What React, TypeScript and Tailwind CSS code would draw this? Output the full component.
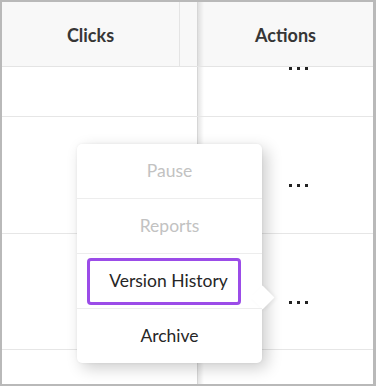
const font = { fontFamily: 'Lato, "Open Sans", sans-serif' };

function Dots() {
  return (
    <div className="flex gap-[5px] pl-[91px]">
      <span className="h-[3px] w-[3px] bg-[#222]" />
      <span className="h-[3px] w-[3px] bg-[#222]" />
      <span className="h-[3px] w-[3px] bg-[#222]" />
    </div>
  );
}

const rows = [
  { h: 'h-[117px]' },
  { h: 'h-[117px]' },
  { h: 'h-[116px]' },
  { h: 'h-[116px]' },
];

export default function App() {
  return (
    <div
      style={font}
      className="relative h-[386px] w-[376px] overflow-hidden border-2 border-r-[3px] border-[#b9b9b9] bg-white"
    >
      <div className="flex h-full flex-col">
        {/* header */}
        <div className="relative z-10 flex h-[65px] shrink-0 border-b border-[#e4e4e4] bg-[#f8f8f8] text-[18px] font-bold text-[#363636]">
          <div className="flex w-[195px] items-center">
            <div className="flex h-full w-[178px] items-center justify-center border-r border-[#e4e4e4] pt-[2px]">
              Clicks
            </div>
          </div>
          <div className="relative flex flex-1 items-center justify-center border-l border-[#d6d6d6] pt-[2px]">
            <div className="absolute inset-y-0 left-0 w-[6px] bg-gradient-to-r from-black/10 to-transparent" />
            Actions
          </div>
        </div>

        {/* body */}
        <div className="flex-1 overflow-hidden">
          <div className="-mt-[67px]">
            {rows.map((r, i) => (
              <div key={i} className={`flex ${r.h} border-b border-[#e6e6e6]`}>
                <div className="w-[195px]" />
                <div className="relative flex-1 border-l border-[#d6d6d6] pt-[67px]">
                  <div className="absolute inset-y-0 left-0 w-[6px] bg-gradient-to-r from-black/10 to-transparent" />
                  <Dots />
                </div>
              </div>
            ))}
          </div>
        </div>
      </div>

      {/* popup menu */}
      <div className="absolute left-[75px] top-[142px] z-20 w-[185px] rounded-[5px] bg-white shadow-[5px_5px_16px_rgba(0,0,0,0.2),0_0_3px_rgba(0,0,0,0.06)]">
        <div className="absolute right-[-9px] top-[145px] h-[17px] w-[17px] rotate-45 bg-white shadow-[2px_-1px_4px_rgba(0,0,0,0.06)]" />
        <div className="relative flex flex-col text-[17.5px]">
          <div className="flex h-[55px] items-center justify-center border-b border-[#ededed] text-[#c2c2c2]">
            Pause
          </div>
          <div className="flex h-[55px] items-center justify-center border-b border-[#ededed] text-[#c2c2c2]">
            Reports
          </div>
          <div className="flex h-[55px] items-center border-b border-[#ededed] pl-[10px] pr-[21px]">
            <div className="flex h-[47px] w-full items-center justify-center rounded-[4px] border-[3px] border-[#9b4ce8] pt-[1px] pl-[9px] text-[#262626]">
              Version History
            </div>
          </div>
          <div className="flex h-[54px] items-center justify-center text-[#262626]">
            Archive
          </div>
        </div>
      </div>
    </div>
  );
}
